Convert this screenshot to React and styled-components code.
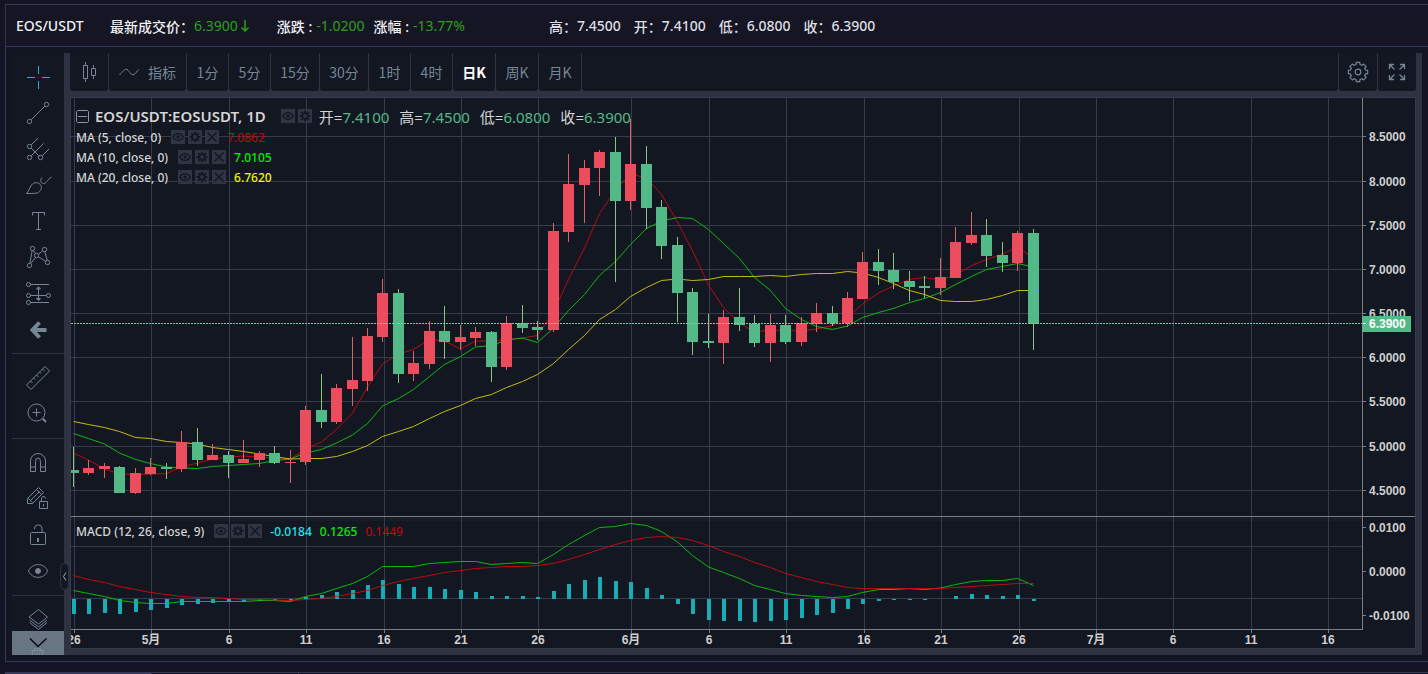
import React from 'react';
import styled, { createGlobalStyle } from 'styled-components';

const GlobalStyle = createGlobalStyle`
  * {
    box-sizing: border-box;
  }
  body {
    margin: 0;
    background-color: #131523;
    font-family: 'Noto Sans', 'Noto Sans CJK SC', sans-serif;
  }
  button {
    padding: 0;
    border: none;
    background: none;
    color: inherit;
    font: inherit;
    cursor: pointer;
  }
  svg {
    display: block;
  }
`;

const Page = styled.div`
  display: flex;
  flex-direction: column;
  gap: 10px;
  height: 100vh;
  padding: 4px 0 0 5px;
  overflow: hidden;
`;

const Frame = styled.main`
  flex: none;
  border: 1px solid #33375a;
  border-right: none;
`;

const Header = styled.header`
  display: flex;
  align-items: center;
  height: 42px;
  padding: 0 10px;
  border-bottom: 1px solid #33375a;
  background-color: #151524;
  color: #f0f0f2;
  font-size: 14px;
  white-space: nowrap;
`;

const PairName = styled.div`
  min-width: 94px;
  font-size: 14px;
  font-weight: 500;
`;

const Quote = styled.div`
  display: flex;
  align-items: center;
  gap: ${(props) => props.$gap || 0}px;
  margin-right: ${(props) => props.$after || 0}px;
  font-weight: ${(props) => props.$weight || 400};
`;

const QuoteLabel = styled.span`
  font-weight: 500;
`;

const Down = styled.span`
  display: flex;
  align-items: center;
  gap: 2px;
  color: #2ca01c;
  font-weight: 400;
`;

const DayStats = styled.div`
  display: flex;
  gap: 13px;
  color: #dedee2;
`;

const Workspace = styled.div`
  display: grid;
  grid-template-columns: 52px minmax(0, 1fr);
  padding: 6px;
`;

const Sidebar = styled.nav`
  position: relative;
  height: 0;
  min-height: 100%;
  padding-top: 6px;
  overflow: hidden;
  background-color: #131722;
  color: #758696;
`;

const ToolGroup = styled.div`
  display: flex;
  flex-direction: column;
  align-items: center;
  padding-bottom: 6px;

  & + & {
    padding-top: 6px;
    border-top: 1px solid #2f3241;
  }
`;

const ToolButton = styled.button`
  width: 36px;
  height: 36px;
  && {
    color: ${(props) => (props.$active ? '#37a6df' : '#758696')};
  }
`;

const ScrollButton = styled.button`
  position: absolute;
  left: 0;
  right: 0;
  bottom: 0;
  height: 24px;
  && {
    background-color: rgba(126, 141, 155, 0.8);
    color: #0c0e15;
  }
`;

const Center = styled.section`
  position: relative;
  display: flex;
  flex-direction: column;
  gap: 6px;
  padding: 0 6px 6px;
  background-color: #2f3241;
`;

const SidebarHandle = styled.button`
  position: absolute;
  top: 510px;
  left: -4px;
  width: 9px;
  height: 27px;
  && {
    border: 1px solid #2f3241;
    background-color: #131722;
    color: #a3adb8;
  }
  border-radius: 5px;
`;

const Toolbar = styled.div`
  display: flex;
  gap: 1px;
  height: 38px;
  color: #758696;
  font-family: 'Noto Sans CJK SC', sans-serif;
  font-size: 14px;
`;

const ToolbarButton = styled.button`
  display: flex;
  align-items: center;
  justify-content: center;
  gap: 9px;
  width: ${(props) => props.$width}px;
  border-radius: 0 0 3px 3px;
  && {
    background-color: #131722;
    color: ${(props) => (props.$active ? '#ffffff' : '#758696')};
    font-weight: ${(props) => (props.$active ? 700 : 400)};
  }
`;

const ToolbarSpace = styled.div`
  flex: 1;
  border-radius: 0 0 3px 3px;
  background-color: #131722;
`;

const Chart = styled.div`
  display: grid;
  grid-template-columns: minmax(0, 1fr) 53px;
  border: 1px solid #363c4e;
  background-color: #131722;
`;

const Pane = styled.div`
  position: relative;
  height: ${(props) => props.$height}px;
  overflow: hidden;
`;

const PaneDivider = styled.div`
  grid-column: 1 / -1;
  height: 1px;
  background-color: #7d7d7d;
`;

const Drawing = styled.svg`
  width: 100%;
  height: 100%;
  shape-rendering: ${(props) => (props.$crisp ? 'crispEdges' : 'auto')};

  text {
    fill: #cfcfcf;
    font-family: 'Liberation Sans', 'Noto Sans CJK SC', sans-serif;
    font-size: 12px;
    font-weight: 700;
  }
`;

const LastPrice = styled.g`
  && text {
    fill: #ffffff;
  }
`;

const Legend = styled.div`
  position: absolute;
  top: ${(props) => props.$top}px;
  left: 5px;
  color: #d4d4d4;
  white-space: nowrap;
`;

const LegendTitle = styled.div`
  display: flex;
  align-items: center;
  height: 22px;
  font-size: 15px;
`;

const CollapseButton = styled.button`
  display: flex;
  margin-right: 6px;
  && {
    color: #8697a3;
  }
`;

const SymbolName = styled.span`
  margin-right: 15px;
  font-weight: 600;
`;

const LegendRow = styled.div`
  display: flex;
  align-items: center;
  gap: 8px;
  height: 20px;
  font-size: 12px;
  font-weight: 500;
`;

const StudyName = styled.span`
  margin-right: 2px;
`;

const LegendActions = styled.span`
  display: flex;
  gap: 3px;
`;

const ActionButton = styled.button`
  width: 14px;
  height: 14px;
  && {
    background-color: #2f3542;
    color: #131722;
  }
`;

const Ohlc = styled.span`
  margin-left: ${(props) => (props.$first ? 7 : 10)}px;
`;

const OhlcValue = styled.span`
  color: #53b987;
`;

const StudyValue = styled.span`
  color: ${(props) => props.$color};
  font-weight: ${(props) => (props.$thin ? 400 : 500)};
`;

const OrdersPanel = styled.section`
  flex: none;
  display: flex;
  border-top: 1px solid #33375a;
`;

const OrdersTab = styled.div`
  width: 147px;
  height: 36px;
  border-right: 1px solid #2a2d48;
  background-color: ${(props) => (props.$active ? '#373a58' : 'transparent')};
`;

const Icon = ({ children, size = 36, width = size, height = size, stroke = 1 }) => (
  <svg
    width={width}
    height={height}
    viewBox={`0 0 ${width} ${height}`}
    fill="none"
    stroke="currentColor"
    strokeWidth={stroke}
    aria-hidden="true"
  >
    {children}
  </svg>
);

const gearPath = (cx, cy, inner, outer) => {
  const points = [];
  for (let i = 0; i < 8; i += 1) {
    [[-0.25, inner], [-0.18, outer], [0.18, outer], [0.25, inner]].forEach(([offset, r]) => {
      const angle = (i * Math.PI) / 4 + offset;
      points.push(`${(cx + r * Math.cos(angle)).toFixed(2)} ${(cy + r * Math.sin(angle)).toFixed(2)}`);
    });
  }
  return `M${points.join('L')}Z`;
};

const toolGroups = [
  [
    {
      name: '十字线',
      active: true,
      icon: <path d="M18.5 7v8M18.5 22v8M7 18.5h8M22 18.5h8" />,
    },
    {
      name: '趋势线',
      icon: (
        <>
          <circle cx="26.5" cy="9.5" r="2.2" />
          <circle cx="9.5" cy="26.5" r="2.2" />
          <path d="M11.2 24.8L24.8 11.2" />
        </>
      ),
    },
    {
      name: '叉线',
      icon: (
        <>
          <circle cx="9.5" cy="15.5" r="2.2" />
          <circle cx="9.5" cy="26.5" r="2.2" />
          <circle cx="20.5" cy="26.5" r="2.2" />
          <path d="M11.2 13.8L18 7M11.2 24.8L23.7 12.3M22.2 24.8L29 18M11.2 17.2L18.8 24.8" />
        </>
      ),
    },
    {
      name: '笔刷',
      icon: (
        <path d="M6.5 26.5C9 24 9.5 20.5 11.5 18C14 14.8 18.2 15.2 20.3 17.5C22.5 20 21 23.5 18.5 25.3C17 26.5 14 26.5 6.5 26.5ZM22 10.5C20 12.5 20.2 16.5 23.5 16.5C26.5 16.5 26.5 13.5 31.5 10" />
      ),
    },
    {
      name: '文本',
      icon: <path d="M12.5 12.5V9.5H24.5V12.5M18.5 9.5V26.5M16 26.5H21" />,
    },
    {
      name: '形态',
      icon: (
        <>
          <circle cx="12.5" cy="9.5" r="2.2" />
          <circle cx="24.5" cy="10.5" r="2.2" />
          <circle cx="16.5" cy="16.5" r="2.2" />
          <circle cx="9.5" cy="26.5" r="2.2" />
          <circle cx="27.5" cy="23.5" r="2.2" />
          <path d="M12.2 11.7L9.8 24.3M13.5 11.5L15.5 14.5M22.7 11.8L18.3 15.2M24.8 12.7L27.2 21.3M15.5 18.5L10.7 24.6M18.3 17.7L25.6 22.3" />
        </>
      ),
    },
    {
      name: '预测',
      icon: (
        <>
          <circle cx="8.5" cy="9.5" r="2" />
          <circle cx="8.5" cy="20.5" r="2" />
          <circle cx="28.5" cy="20.5" r="2" />
          <circle cx="8.5" cy="27.5" r="2" />
          <path d="M10.5 9.5H29M10.5 20.5H26.5M10.5 27.5H29M18.5 12V25M16.5 14L18.5 11.8L20.5 14ZM16.5 23.5L18.5 25.7L20.5 23.5Z" />
        </>
      ),
    },
    {
      name: '返回',
      icon: <path d="M26.5 19H14M19.5 11.5L12.5 19L19.5 26.5" strokeWidth="4" />,
    },
  ],
  [
    {
      name: '测量',
      icon: (
        <path d="M25 6.5L29.5 11L11 29.5L6.5 25ZM22.5 9L24.5 11M19.5 12L21 13.5M16.5 15L18.5 17M13.5 18L15 19.5M10.5 21L12.5 23" />
      ),
    },
    {
      name: '放大',
      icon: (
        <>
          <circle cx="16.5" cy="16.5" r="8.5" />
          <path d="M16.5 12.5V20.5M12.5 16.5H20.5" />
          <path d="M22.8 22.8L26 26" strokeWidth="2" />
        </>
      ),
    },
  ],
  [
    {
      name: '磁铁模式',
      icon: (
        <path d="M10.5 26.5V16A7.5 7.5 0 0 1 25.5 16V26.5H20.5V16.5A2.5 3.5 0 0 0 15.5 16.5V26.5ZM10.5 22H15.5M20.5 22H25.5" />
      ),
    },
    {
      name: '保持绘图模式',
      icon: (
        <>
          <path d="M7.5 22.5V17.5L18.5 6.5L23.5 11.5L12.5 22.5ZM16.5 8.5L21.5 13.5M8.5 17.5L12.5 21.5M10.5 19.5L19.5 10.5" />
          <path d="M19.5 20.5H27.5V27.5H19.5ZM21.5 20V18.5A2 2.5 0 0 1 25.5 17.5M23.5 23V25.5" />
        </>
      ),
    },
    {
      name: '锁定绘图',
      icon: (
        <>
          <path d="M11.5 15.5H24.5Q25.5 15.5 25.5 16.5V26.5Q25.5 27.5 24.5 27.5H11.5Q10.5 27.5 10.5 26.5V16.5Q10.5 15.5 11.5 15.5ZM14.5 12V11A3.8 3.8 0 0 1 22 11V15.5" />
          <path d="M18 21V25" strokeWidth="2" />
        </>
      ),
    },
    {
      name: '隐藏绘图',
      icon: (
        <>
          <path d="M8.5 18C12 9.5 24.5 9.5 27.5 18C24.5 26.5 12 26.5 8.5 18Z" />
          <circle cx="18" cy="18" r="2.5" fill="currentColor" />
        </>
      ),
    },
  ],
  [
    {
      name: '对象树',
      icon: (
        <path d="M18.5 7.5L27.5 15L18.5 22L9 15ZM9.5 18L18.5 25L27 18M9.5 20.5L18.5 27.5L27 20.5" />
      ),
    },
    {
      name: '删除绘图',
      icon: (
        <path d="M11 12.5H24M14.5 12.5V10.5H20.5V12.5M12.5 12.5V27.5H22.5V12.5M15.5 15V25M17.5 15V25M19.5 15V25" />
      ),
    },
  ],
];

const intervals = [
  ['1分', 41],
  ['5分', 41],
  ['15分', 48],
  ['30分', 48],
  ['1时', 41],
  ['4时', 41],
  ['日K', 42],
  ['周K', 42],
  ['月K', 42],
];

const stats = [
  ['高', '7.4500'],
  ['开', '7.4100'],
  ['低', '6.0800'],
  ['收', '6.3900'],
];

const ohlc = [
  ['开', '7.4100'],
  ['高', '7.4500'],
  ['低', '6.0800'],
  ['收', '6.3900'],
];

const studies = [
  { name: 'MA (5, close, 0)', value: '7.0862', color: '#c80808', thin: true },
  { name: 'MA (10, close, 0)', value: '7.0105', color: '#00f000' },
  { name: 'MA (20, close, 0)', value: '6.7620', color: '#f5f500' },
];

// [high, body top, body bottom, low, rising]
const candles = [
  [447, 470, 473, 487, 0], [460, 468, 473, 475, 1], [463, 466, 469, 478, 1], [466, 467, 493, 493, 0],
  [468, 473, 493, 494, 1], [458, 467, 474, 475, 1], [463, 467, 469, 479, 0], [431, 442, 469, 472, 1],
  [428, 442, 460, 466, 0], [444, 455, 460, 460, 1], [451, 455, 463, 478, 0], [440, 459, 463, 463, 1],
  [451, 453, 460, 467, 1], [446, 453, 463, 464, 0], [450, 462, 463, 483, 1], [406, 410, 462, 465, 1],
  [374, 410, 422, 428, 0], [384, 388, 422, 424, 1], [337, 380, 389, 406, 1], [328, 336, 381, 391, 1],
  [279, 293, 337, 342, 1], [289, 293, 374, 383, 0], [351, 363, 374, 381, 1], [321, 331, 364, 369, 1],
  [306, 331, 342, 359, 0], [325, 337, 342, 350, 1], [327, 332, 338, 346, 1], [331, 332, 367, 382, 0],
  [316, 323, 367, 370, 1], [305, 323, 328, 333, 0], [321, 327, 330, 340, 0], [223, 231, 330, 332, 1],
  [154, 184, 232, 242, 1], [160, 168, 185, 223, 1], [150, 152, 168, 196, 1], [137, 152, 201, 282, 0],
  [119, 164, 201, 210, 1], [146, 164, 208, 229, 0], [200, 207, 246, 259, 0], [237, 245, 293, 322, 0],
  [288, 292, 342, 355, 0], [314, 341, 343, 348, 0], [310, 317, 343, 364, 1], [288, 317, 325, 331, 0],
  [315, 324, 343, 347, 0], [314, 325, 343, 362, 1], [315, 325, 342, 344, 0], [317, 323, 342, 346, 1],
  [303, 313, 324, 332, 1], [306, 313, 323, 326, 0], [292, 298, 323, 327, 1], [252, 262, 299, 299, 1],
  [249, 262, 271, 285, 0], [253, 270, 282, 289, 0], [271, 281, 287, 301, 0], [276, 286, 288, 298, 0],
  [258, 277, 288, 295, 1], [227, 242, 278, 278, 1], [212, 235, 243, 245, 1], [219, 235, 256, 267, 0],
  [242, 255, 263, 272, 0], [231, 233, 263, 271, 1], [229, 233, 324, 350, 0],
];

const ma5 = [
  453, 460, 469, 474, 474.5, 474, 473.5, 467, 463, 459, 457, 456, 457, 458.5, 459, 449, 442, 429.5, 413, 387, 364,
  354, 349.5, 339.5, 341, 349, 341, 341, 339.5, 338, 335.5, 312, 279.5, 248, 213.5, 190, 174, 178, 194.5, 222,
  250.5, 285, 307.5, 323, 332, 330, 330.5, 331, 329, 325.5, 317, 304, 293, 286, 279.5, 277.5, 280, 275, 265.5,
  259.5, 254, 247, 258,
];

const ma10 = [
  433.5, 438.5, 444, 453, 459.5, 463.5, 467, 468, 468.5, 466.5, 465.5, 464.5, 463.5, 460.5, 459, 453, 449.5, 443,
  435, 423.5, 406, 398.5, 389.5, 376.5, 364.5, 356.5, 347, 345.5, 340, 338, 342.5, 328, 310.5, 294.5, 275.5, 261.5,
  244.5, 228.5, 221, 217.5, 218.5, 229.5, 243.5, 258.5, 277.5, 290.5, 308.5, 319.5, 326.5, 329.5, 326, 317.5, 312.5,
  308.5, 302.5, 298.5, 292.5, 284.5, 276.5, 269.5, 266.5, 263.5, 267,
];

const ma20 = [
  421.5, 424.5, 427.5, 431.5, 437.5, 438.5, 441.5, 442.5, 444, 447.5, 449.5, 451.5, 454, 456.5, 459, 458.5, 458.5,
  456.5, 451.5, 445.5, 436.5, 431.5, 426.5, 418.5, 411.5, 405.5, 398.5, 394.5, 387.5, 381.5, 374.5, 363.5, 349.5,
  335.5, 319.5, 309.5, 296.5, 287.5, 280.5, 279, 280.5, 279.5, 276.5, 276.5, 276.5, 275.5, 276.5, 274.5, 273.5,
  273.5, 271.5, 273, 277.5, 283.5, 290.5, 294.5, 300.5, 301.5, 301.5, 299.5, 295.5, 290.5, 290.5,
];

const macdBars = [
  -15, -15, -14, -15, -13, -11, -9, -6, -5, -4, -3, -3, -2, -1, -2, 2, 4, 7, 9, 14, 19, 15, 12, 12, 10, 9, 7, 3, 3,
  3, 2, 8, 15, 19, 22, 18, 17, 11, 4, -5, -15, -21, -22, -22, -23, -22, -21, -19, -16, -14, -10, -5, -2, -1, -1, -1,
  0, 3, 5, 4, 3, 4, -2,
];

const macdLine = [
  590.5, 593.5, 596.5, 600.5, 602.5, 603.5, 603.5, 601.5, 601.5, 601.5, 601.5, 601.5, 600.5, 600.5, 601.5, 596.5,
  593.5, 588.5, 583.5, 576.5, 566.5, 566.5, 566.5, 563.5, 562.5, 561.5, 561.5, 564.5, 563.5, 562.5, 563.5, 554.5,
  544.5, 535.5, 527.5, 526.5, 523.5, 525.5, 531.5, 542, 555.5, 567, 572.5, 578.5, 585.5, 589.5, 593.5, 595.5, 596.5,
  597.5, 596.5, 592.5, 589.5, 589.5, 588.5, 589.5, 588, 584.5, 581.5, 580.5, 580.5, 578.5, 585.5,
];

const signalLine = [
  575.5, 579.5, 582.5, 586.5, 589.5, 592.5, 594.5, 596.5, 597.5, 597.5, 598.5, 599.5, 599.5, 600, 600.5, 599.5,
  598.5, 596.5, 593.5, 590.5, 585.5, 581.5, 578.5, 575.5, 572.5, 570.5, 568.5, 567.5, 566.5, 566.5, 565.5, 563.5,
  559.5, 554.5, 549.5, 544.5, 540.5, 537.5, 536.5, 537.5, 540.5, 545.5, 551.5, 556.5, 562.5, 567.5, 573.5, 577.5,
  581.5, 584.5, 587.5, 588.5, 588.5, 588.5, 588.5, 588.5, 588.5, 587.5, 586.5, 585.5, 584.5, 583.5, 583.5,
];

const dates = [
  [74, '26'], [151, '5月'], [229, '6'], [306, '11'], [384, '16'], [461, '21'], [538, '26'], [631, '6月'], [709, '6'],
  [786, '11'], [864, '16'], [941, '21'], [1019, '26'], [1096, '7月'], [1173, '6'], [1251, '11'], [1328, '16'],
];

const prices = [
  [136, '8.5000'], [181, '8.0000'], [225, '7.5000'], [269, '7.0000'], [313, '6.5000'], [357, '6.0000'],
  [401, '5.5000'], [446, '5.0000'], [490, '4.5000'],
];

const macdLevels = [
  [527, '0.0100'],
  [571, '0.0000'],
  [615, '-0.0100'],
];

const LEFT = 71;
const PRICE_TOP = 98;
const MACD_TOP = 517;
const MACD_ZERO = 599;
const GRID = '#363c4e';
const AXIS = '#7d7d7d';

const barX = (index) => Math.floor(73.3 + 15.484 * index) - LEFT;
const linePoints = (values, top) => values.map((y, i) => `${barX(i) + 0.5},${y - top}`).join(' ');

const Line = ({ values, top, color }) => (
  <polyline
    points={linePoints(values, top)}
    fill="none"
    stroke={color}
    strokeOpacity="0.9"
    shapeRendering="auto"
  />
);

const Grid = ({ levels }) => (
  <g fill={GRID}>
    {dates.map(([x]) => (
      <rect key={x} x={x - LEFT} y="0" width="1" height="100%" />
    ))}
    {levels.map((y) => (
      <rect key={y} x="0" y={y} width="100%" height="1" />
    ))}
  </g>
);

const Scale = ({ levels, top }) => (
  <>
    <rect x="0" y="0" width="1" height="100%" fill={AXIS} />
    {levels.map(([y, label]) => (
      <g key={label}>
        <rect x="1" y={y - top} width="3" height="1" fill={AXIS} />
        <text x="7" y={y - top + 5}>
          {label}
        </text>
      </g>
    ))}
  </>
);

const Actions = ({ removable }) => (
  <LegendActions>
    <ActionButton aria-label="隐藏">
      <Icon size={14}>
        <path d="M2 7C4 2.5 10 2.5 12 7C10 11.5 4 11.5 2 7Z" strokeWidth="1.4" />
        <circle cx="7" cy="7" r="1.2" fill="currentColor" />
      </Icon>
    </ActionButton>
    <ActionButton aria-label="设置">
      <Icon size={14} stroke={1.5}>
        <path d={gearPath(7, 7, 3.7, 5.4)} fill="currentColor" stroke="none" />
        <circle cx="7" cy="7" r="1.9" fill="#2f3542" stroke="none" />
      </Icon>
    </ActionButton>
    {removable && (
      <ActionButton aria-label="删除">
        <Icon size={14} stroke={1.5}>
          <path d="M2.5 2.5L11.5 11.5M11.5 2.5L2.5 11.5" />
        </Icon>
      </ActionButton>
    )}
  </LegendActions>
);

const TopHeader = () => (
  <Header>
    <PairName>EOS/USDT</PairName>
    <Quote $after={27}>
      <QuoteLabel>最新成交价：</QuoteLabel>
      <Down>
        6.3900
        <Icon width={10} height={14} stroke={1.5}>
          <path d="M5 1V12M1.5 8.5L5 12L8.5 8.5" />
        </Icon>
      </Down>
    </Quote>
    <Quote $gap={4} $after={9}>
      <QuoteLabel>涨跌 :</QuoteLabel>
      <Down>-1.0200</Down>
    </Quote>
    <Quote $gap={4} $after={84}>
      <QuoteLabel>涨幅 :</QuoteLabel>
      <Down>-13.77%</Down>
    </Quote>
    <DayStats>
      {stats.map(([label, value]) => (
        <Quote key={label} $weight={500}>
          <span>{label}：</span>
          <span>{value}</span>
        </Quote>
      ))}
    </DayStats>
  </Header>
);

const DrawingTools = () => (
  <Sidebar aria-label="绘图工具">
    {toolGroups.map((group) => (
      <ToolGroup key={group[0].name}>
        {group.map((tool) => (
          <ToolButton key={tool.name} $active={tool.active} aria-label={tool.name}>
            <Icon>{tool.icon}</Icon>
          </ToolButton>
        ))}
      </ToolGroup>
    ))}
    <ScrollButton aria-label="向下滚动">
      <Icon width={52} height={24} stroke={1.6}>
        <path d="M18 7.5L26 15.5L34.5 7.5" />
      </Icon>
    </ScrollButton>
  </Sidebar>
);

const ChartToolbar = () => (
  <Toolbar>
    <ToolbarButton $width={38} aria-label="图表类型">
      <Icon width={16} height={22}>
        <path d="M2.5 4.5H6.5V17.5H2.5ZM4.5 1V4.5M4.5 17.5V21M10.5 7.5H14.5V14.5H10.5ZM12.5 4V7.5M12.5 14.5V18" />
      </Icon>
    </ToolbarButton>
    <ToolbarButton $width={77}>
      <Icon width={20} height={10}>
        <path d="M0.5 8C4 4 6 1.5 8 2.5C11 4.5 12 9 15 7.5C17 6.5 18 4 19.5 2.5" />
      </Icon>
      指标
    </ToolbarButton>
    {intervals.map(([label, width]) => (
      <ToolbarButton key={label} $width={width} $active={label === '日K'}>
        {label}
      </ToolbarButton>
    ))}
    <ToolbarSpace />
    <ToolbarButton $width={38} aria-label="设置">
      <Icon size={22} stroke={1.2}>
        <path d={gearPath(11, 11, 7.8, 9.8)} />
        <circle cx="11" cy="11" r="2.8" />
      </Icon>
    </ToolbarButton>
    <ToolbarButton $width={38} aria-label="全屏">
      <Icon size={18} stroke={1.3}>
        <path d="M1.5 6V1.5H6M1.5 1.5L6.5 6.5M12 1.5H16.5V6M16.5 1.5L11.5 6.5M16.5 12V16.5H12M16.5 16.5L11.5 11.5M6 16.5H1.5V12M1.5 16.5L6.5 11.5" />
      </Icon>
    </ToolbarButton>
  </Toolbar>
);

const PricePane = () => (
  <Pane $height={418}>
    <Drawing $crisp>
      <Grid levels={prices.map(([y]) => y - PRICE_TOP)} />
      <Line values={ma5} top={PRICE_TOP} color="#c80b0b" />
      <Line values={ma10} top={PRICE_TOP} color="#0cc80c" />
      <Line values={ma20} top={PRICE_TOP} color="#d6cc10" />
      {candles.map(([high, top, bottom, low, rising], i) => (
        <g key={i}>
          <rect
            x={barX(i)}
            y={high - PRICE_TOP}
            width="1"
            height={low - high}
            fill={rising ? '#df6262' : '#8fc27a'}
          />
          <rect
            x={barX(i) - 5}
            y={top - PRICE_TOP}
            width="11"
            height={bottom - top}
            fill={rising ? '#eb4d5c' : '#53b987'}
          />
        </g>
      ))}
      <line x1="0" x2="100%" y1="225.5" y2="225.5" stroke="#7cc9a5" strokeDasharray="2 1" />
    </Drawing>
    <Legend $top={7}>
      <LegendTitle>
        <CollapseButton aria-label="折叠">
          <Icon size={13}>
            <path d="M1.5 0.5H11.5L12.5 1.5V11.5L11.5 12.5H1.5L0.5 11.5V1.5ZM2 6.5H11" />
          </Icon>
        </CollapseButton>
        <SymbolName>EOS/USDT:EOSUSDT, 1D</SymbolName>
        <Actions />
        {ohlc.map(([label, value], i) => (
          <Ohlc key={label} $first={i === 0}>
            {label}=<OhlcValue>{value}</OhlcValue>
          </Ohlc>
        ))}
      </LegendTitle>
      {studies.map((study) => (
        <LegendRow key={study.name}>
          <StudyName>{study.name}</StudyName>
          <Actions removable />
          <StudyValue $color={study.color} $thin={study.thin}>
            {study.value}
          </StudyValue>
        </LegendRow>
      ))}
    </Legend>
  </Pane>
);

const MacdPane = () => (
  <Pane $height={112}>
    <Drawing $crisp>
      <rect x="0" y="0" width="100%" height="4" fill="#181c27" />
      <Grid levels={[29, 81]} />
      {macdBars.map((value, i) => (
        <rect
          key={i}
          x={barX(i) - 1}
          y={MACD_ZERO - MACD_TOP - Math.max(value, 0)}
          width="4"
          height={Math.abs(value)}
          fill="#17adb6"
        />
      ))}
      <Line values={macdLine} top={MACD_TOP} color="#0cc80c" />
      <Line values={signalLine} top={MACD_TOP} color="#d00b0b" />
    </Drawing>
    <Legend $top={4}>
      <LegendRow>
        <StudyName>MACD (12, 26, close, 9)</StudyName>
        <Actions removable />
        <StudyValue $color="#22e4ee">-0.0184</StudyValue>
        <StudyValue $color="#00f000">0.1265</StudyValue>
        <StudyValue $color="#c80808" $thin>
          0.1449
        </StudyValue>
      </LegendRow>
    </Legend>
  </Pane>
);

const TradingChart = () => (
  <Chart>
    <PricePane />
    <Pane $height={418}>
      <Drawing>
        <Scale levels={prices} top={PRICE_TOP} />
        <LastPrice>
          <rect x="0" y="218" width="49" height="16" fill="#53b987" />
          <rect x="1" y="225" width="3" height="1" fill="#ffffff" />
          <text x="7" y="230">
            6.3900
          </text>
        </LastPrice>
      </Drawing>
    </Pane>
    <PaneDivider />
    <MacdPane />
    <Pane $height={112}>
      <Drawing>
        <Scale levels={macdLevels} top={MACD_TOP} />
      </Drawing>
    </Pane>
    <Pane $height={19}>
      <Drawing>
        <rect x="0" y="0" width="100%" height="1" fill={AXIS} />
        {dates.map(([x, label]) => (
          <g key={x}>
            <rect x={x - LEFT} y="1" width="1" height="3" fill={AXIS} />
            <text x={x - LEFT} y="15" textAnchor="middle">
              {label}
            </text>
          </g>
        ))}
      </Drawing>
    </Pane>
    <Pane $height={19}>
      <Drawing>
        <rect x="0" y="0" width="1" height="1" fill={AXIS} />
      </Drawing>
    </Pane>
  </Chart>
);

const App = () => (
  <>
    <GlobalStyle />
    <Page>
      <Frame>
        <TopHeader />
        <Workspace>
          <DrawingTools />
          <Center>
            <ChartToolbar />
            <TradingChart />
            <SidebarHandle aria-label="收起工具栏">
              <Icon width={7} height={25}>
                <path d="M5 8.5L2.5 12.5L5 16.5" />
              </Icon>
            </SidebarHandle>
          </Center>
        </Workspace>
      </Frame>
      <OrdersPanel>
        <OrdersTab $active />
        <OrdersTab />
      </OrdersPanel>
    </Page>
  </>
);

export default App;
